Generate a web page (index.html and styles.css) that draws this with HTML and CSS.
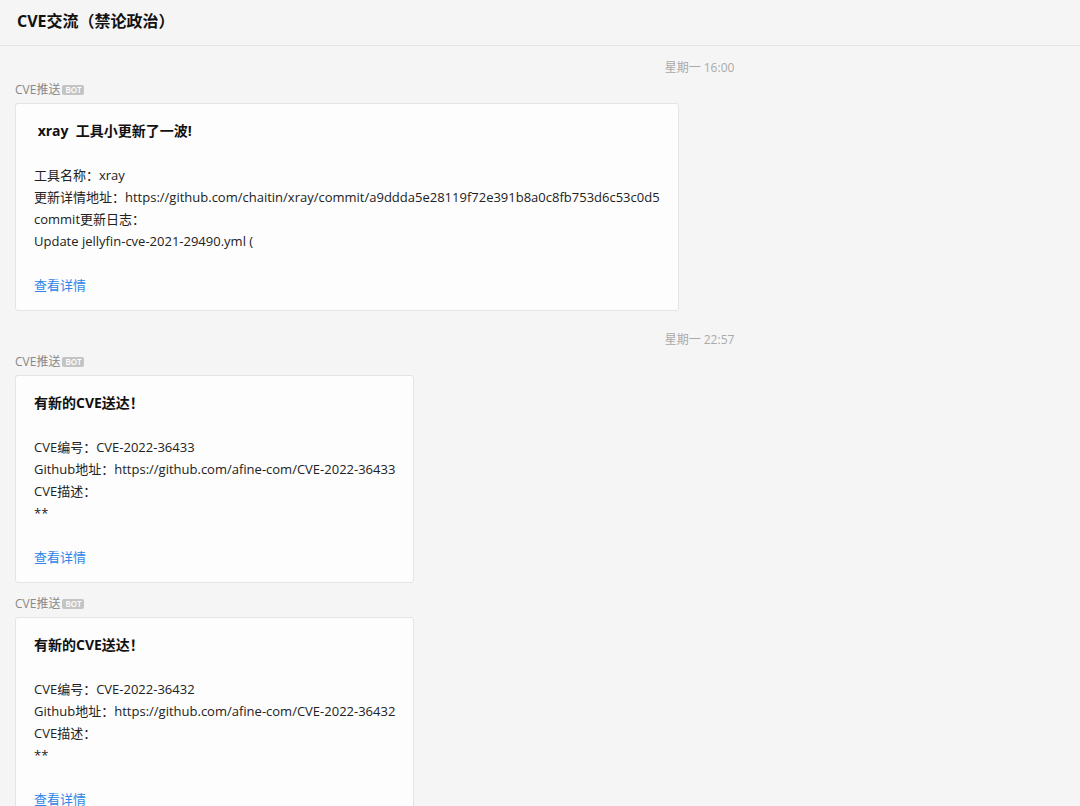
FILE: index.html
```html
<!DOCTYPE html>
<html lang="zh-CN">
<head>
<meta charset="utf-8">
<title>CVE交流（禁论政治）</title>
<link rel="stylesheet" href="styles.css">
</head>
<body>
<header class="topbar">
  <h1 class="title">CVE交流（禁论政治）</h1>
</header>
<main class="chat">
  <div class="time"><span>星期一 16:00</span></div>
  <div class="msg">
    <div class="sender">CVE推送<span class="bot">BOT</span></div>
    <div class="card">
      <div class="card-title">&nbsp;xray&nbsp; 工具小更新了一波!</div>
      <div class="blank"></div>
      <div class="line">工具名称：xray</div>
      <div class="line">更新详情地址：https://github.com/chaitin/xray/commit/a9ddda5e28119f72e391b8a0c8fb753d6c53c0d5</div>
      <div class="line">commit更新日志：</div>
      <div class="line">Update jellyfin-cve-2021-29490.yml (</div>
      <div class="blank"></div>
      <a class="link" href="#">查看详情</a>
    </div>
  </div>
  <div class="time time-gap"><span>星期一 22:57</span></div>
  <div class="msg">
    <div class="sender">CVE推送<span class="bot">BOT</span></div>
    <div class="card">
      <div class="card-title">有新的CVE送达！</div>
      <div class="blank"></div>
      <div class="line">CVE编号：CVE-2022-36433</div>
      <div class="line">Github地址：https://github.com/afine-com/CVE-2022-36433</div>
      <div class="line">CVE描述：</div>
      <div class="line">**</div>
      <div class="blank"></div>
      <a class="link" href="#">查看详情</a>
    </div>
  </div>
  <div class="msg msg-next">
    <div class="sender">CVE推送<span class="bot">BOT</span></div>
    <div class="card">
      <div class="card-title">有新的CVE送达！</div>
      <div class="blank"></div>
      <div class="line">CVE编号：CVE-2022-36432</div>
      <div class="line">Github地址：https://github.com/afine-com/CVE-2022-36432</div>
      <div class="line">CVE描述：</div>
      <div class="line">**</div>
      <div class="blank"></div>
      <a class="link" href="#">查看详情</a>
    </div>
  </div>
</main>
</body>
</html>
```
FILE: styles.css
```css
html, body {
  margin: 0;
  padding: 0;
  height: 100%;
  overflow: hidden;
  background: #f5f5f5;
  font-family: "Open Sans", "Noto Sans CJK SC", sans-serif;
  color: #222;
}

.topbar {
  height: 45px;
  border-bottom: 1px solid #e6e6e6;
  display: flex;
  align-items: center;
  padding-left: 17px;
  box-sizing: content-box;
}

.title {
  margin: 0;
  font-size: 16px;
  font-weight: 700;
  color: #111;
  line-height: 20px;
  margin-top: -3px;
}

.chat {
  padding: 0 15px;
  display: flex;
  flex-direction: column;
  align-items: flex-start;
}

.time {
  align-self: stretch;
  margin-top: 13px;
  padding-left: 319px;
  text-align: center;
  font-size: 12px;
  line-height: 18px;
  color: #aaa;
}

.time-gap {
  margin-top: 20px;
}

.msg {
  margin-top: 5px;
  display: flex;
  flex-direction: column;
  align-items: flex-start;
}

.msg-next {
  margin-top: 13px;
}

.sender {
  font-size: 12px;
  line-height: 16px;
  color: #888;
  display: flex;
  align-items: center;
}

.bot {
  display: inline-block;
  margin-left: 2px;
  background: #c4c4c4;
  color: #fff;
  font-size: 8px;
  line-height: 10px;
  padding: 0 3px;
  border-radius: 2px;
  font-weight: 600;
}

.card {
  margin-top: 5px;
  background: #fdfdfd;
  border: 1px solid #e4e4e4;
  border-radius: 3px;
  padding: 16px 18px 14px;
  font-size: 13px;
  line-height: 22px;
  white-space: nowrap;
}

.card-title {
  font-size: 14px;
  font-weight: 700;
  color: #111;
}

.blank {
  height: 22px;
}

.line {
  color: #222;
}

.link {
  display: block;
  color: #2f86e8;
  text-decoration: none;
}
```
